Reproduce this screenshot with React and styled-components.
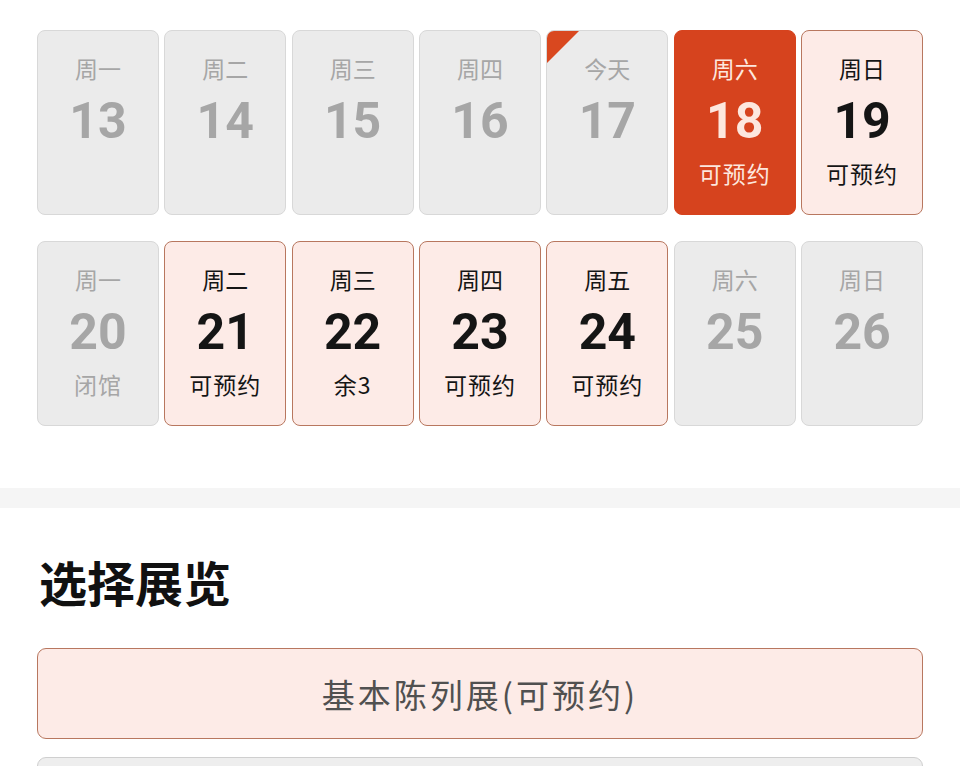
import styled, { createGlobalStyle, css } from 'styled-components';

const GlobalStyle = createGlobalStyle`
  html, body {
    margin: 0;
    padding: 0;
    background: #fff;
    font-family: 'Noto Sans CJK SC', 'Noto Sans', sans-serif;
  }
`;

const weeks = [
  [
    { wd: '周一', day: 13, kind: 'off' },
    { wd: '周二', day: 14, kind: 'off' },
    { wd: '周三', day: 15, kind: 'off' },
    { wd: '周四', day: 16, kind: 'off' },
    { wd: '今天', day: 17, kind: 'off', today: true },
    { wd: '周六', day: 18, kind: 'selected', note: '可预约' },
    { wd: '周日', day: 19, kind: 'open', note: '可预约' },
  ],
  [
    { wd: '周一', day: 20, kind: 'off', note: '闭馆' },
    { wd: '周二', day: 21, kind: 'open', note: '可预约' },
    { wd: '周三', day: 22, kind: 'open', note: '余3' },
    { wd: '周四', day: 23, kind: 'open', note: '可预约' },
    { wd: '周五', day: 24, kind: 'open', note: '可预约' },
    { wd: '周六', day: 25, kind: 'off' },
    { wd: '周日', day: 26, kind: 'off' },
  ],
];

const App = () => {
  return (
    <Page>
      <GlobalStyle />
      <Calendar>
        {weeks.map((week, i) => (
          <Week key={i}>
            {week.map((d) => (
              <Day key={d.day} kind={d.kind}>
                {d.today && <TodayMark />}
                <WeekDay>{d.wd}</WeekDay>
                <DayNum>{d.day}</DayNum>
                <Note>{d.note || ''}</Note>
              </Day>
            ))}
          </Week>
        ))}
      </Calendar>
      <Divider />
      <Section>
        <Title>选择展览</Title>
        <Exhibit active>基本陈列展(可预约)</Exhibit>
        <Exhibit />
      </Section>
    </Page>
  );
};

export default App;

const Page = styled.div`
  width: 960px;
  height: 766px;
  overflow: hidden;
  background: #fff;
`;

const Calendar = styled.div`
  padding: 30px 37px 0;
  display: flex;
  flex-direction: column;
  gap: 26px;
  height: 458px;
  box-sizing: border-box;
`;

const Week = styled.div`
  display: grid;
  grid-template-columns: repeat(7, 1fr);
  gap: 5.5px;
`;

const kinds = {
  off: css`
    background: #ebebeb;
    border-color: #d8d8d8;
    color: #a6a6a6;
  `,
  open: css`
    background: #fdebe7;
    border-color: #b8775f;
    color: #151515;
  `,
  selected: css`
    background: #d6431e;
    border-color: #d6431e;
    color: #fde7de;
  `,
};

const Day = styled.div`
  position: relative;
  overflow: hidden;
  height: 185px;
  box-sizing: border-box;
  border: 1.5px solid;
  border-radius: 8px;
  display: flex;
  flex-direction: column;
  align-items: center;
  padding-top: 22px;
  ${(p) => kinds[p.kind]}
`;

const TodayMark = styled.div`
  position: absolute;
  top: 0;
  left: 0;
  width: 0;
  height: 0;
  border-top: 32px solid #d9481f;
  border-right: 32px solid transparent;
`;

const WeekDay = styled.div`
  font-size: 23px;
  line-height: 30px;
`;

const DayNum = styled.div`
  margin-top: 2px;
  font-family: Roboto, 'Noto Sans', sans-serif;
  font-weight: 700;
  font-size: 50px;
  line-height: 72px;
`;

const Note = styled.div`
  font-size: 23px;
  line-height: 32px;
  letter-spacing: 1px;
`;

const Divider = styled.div`
  height: 20px;
  background: #f5f5f5;
  margin-top: 30px;
`;

const Section = styled.div`
  padding: 41px 37px 0;
  display: flex;
  flex-direction: column;
  gap: 18px;
`;

const Title = styled.h2`
  margin: 0 0 17px 2px;
  font-size: 48px;
  line-height: 64px;
  font-weight: 700;
  color: #111;
`;

const Exhibit = styled.div`
  flex-shrink: 0;
  height: 91px;
  box-sizing: border-box;
  border-radius: 9px;
  border: 1.5px solid ${(p) => (p.active ? '#b8775f' : '#cfcfcf')};
  background: ${(p) => (p.active ? '#fdebe7' : '#eeeeee')};
  display: flex;
  align-items: center;
  justify-content: center;
  font-size: 33px;
  letter-spacing: 3px;
  color: #505050;
`;
